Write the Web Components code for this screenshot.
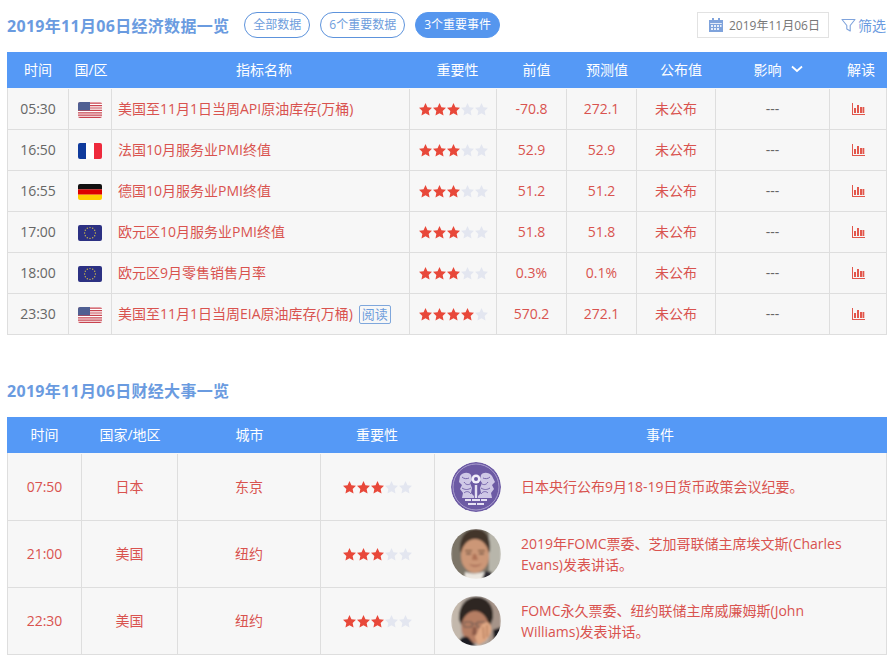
<!DOCTYPE html>
<html lang="zh">
<head>
<meta charset="utf-8">
<title>经济数据一览</title>
<style>
  html, body { margin: 0; background: #fff; overflow: hidden; }
  body { font: 14px "Open Sans", "Noto Sans CJK SC", sans-serif; color: #666; }
</style>
</head>
<body>
<calendar-page></calendar-page>

<script>
const FLAGS = {
  us: `<rect width="24" height="16" fill="#fff"/>
    <path d="M0 1.200h24M0 3.600h24M0 6h24M0 8.400h24M0 10.800h24M0 13.200h24M0 15.400h24" stroke="#c8434f" stroke-width="1.200"/>
    <rect width="12" height="8.400" fill="#4f5f92"/>`,
  fr: `<rect width="8" height="16" fill="#0f3a9c"/><rect x="8" width="8" height="16" fill="#fff"/><rect x="16" width="8" height="16" fill="#ee2a3c"/>`,
  de: `<rect width="24" height="5.400" fill="#111"/><rect y="5.400" width="24" height="5.300" fill="#dd0000"/><rect y="10.700" width="24" height="5.300" fill="#ffce00"/>`,
  eu: `<rect width="24" height="16" fill="#2c3183"/>
    <g fill="#c9b64a">${Array.from({ length: 12 }, (_, i) => {
      const a = i * Math.PI / 6
      return `<circle cx="${(12 + 5.4 * Math.cos(a)).toFixed(2)}" cy="${(8 + 5.4 * Math.sin(a)).toFixed(2)}" r=".7"/>`
    }).join('')}</g>`
}

customElements.define('flag-icon', class extends HTMLElement {
  constructor () {
    super()
    this.attachShadow({ mode: 'open' }).innerHTML = `
      <style>
        :host { display: block; width: 24px; height: 16px; margin-top: 1px; }
        svg { display: block; border-radius: 2px; }
      </style>
      <svg width="24" height="16" viewBox="0 0 24 16">${FLAGS[this.getAttribute('code')]}</svg>`
  }
})

customElements.define('star-rating', class extends HTMLElement {
  constructor () {
    super()
    const on = Number(this.getAttribute('value'))
    const star = 'M6.500 0l1.950 4.200 4.550.6-3.350 3.100.9 4.600-4.050-2.300-4.050 2.300.9-4.600L0 4.800l4.550-.6z'
    const stars = [0, 1, 2, 3, 4].map(i =>
      `<svg width="13" height="13" viewBox="0 0 13 13"><path d="${star}" fill="${i < on ? '#e8483a' : '#e3e6f0'}"/></svg>`).join('')
    this.attachShadow({ mode: 'open' }).innerHTML = `
      <style>
        :host { display: flex; gap: 1px; }
        svg { display: block; }
      </style>${stars}`
  }
})

customElements.define('pill-button', class extends HTMLElement {
  constructor () {
    super()
    this.attachShadow({ mode: 'open' }).innerHTML = `
      <style>
        :host {
          display: block; height: 24px; line-height: 23px; padding: 0 8px;
          border: 1px solid #5d93dc; border-radius: 13px;
          font-size: 12px; color: #6d9ddc; white-space: nowrap;
        }
        :host([active]) { background: #5596ee; border-color: #5596ee; color: #fff; }
      </style>
      <slot></slot>`
  }
})

customElements.define('top-bar', class extends HTMLElement {
  constructor () {
    super()
    this.attachShadow({ mode: 'open' }).innerHTML = `
      <style>
        :host { display: flex; align-items: center; height: 26px; margin: 12px 0 14px; }
        h2 { margin: 0 15px 0 0; font-size: 16px; letter-spacing: .3px; font-weight: 700; color: #6a9be0; white-space: nowrap; }
        .pills { display: flex; gap: 10px; }
        .date {
          display: flex; align-items: center; gap: 6px; box-sizing: border-box;
          margin-left: auto; width: 132px; height: 26px; padding-left: 11px;
          border: 1px solid #e2e2e2; font-size: 12px; color: #777; white-space: nowrap;
        }
        .filter { display: flex; align-items: center; gap: 2px; margin: 0 1px 0 12px; font-size: 14px; color: #6a9be0; white-space: nowrap; }
        svg { display: block; }
      </style>
      <h2>2019年11月06日经济数据一览</h2>
      <div class="pills">
        <pill-button>全部数据</pill-button>
        <pill-button>6个重要数据</pill-button>
        <pill-button active>3个重要事件</pill-button>
      </div>
      <div class="date">
        <svg width="14" height="14" viewBox="0 0 14 14">
          <path fill="#7fa3dc" d="M0 2h14v12H0z"/><path fill="#7fa3dc" d="M3 0h2v3H3zM9 0h2v3H9z"/>
          <path fill="#fff" d="M1.200 5h11.600v.8H1.200z"/>
          <path fill="#e8effa" d="M2 7h2v2H2zM5 7h2v2H5zM8 7h2v2H8zM11 7h1.500v2H11zM2 10h2v2H2zM5 10h2v2H5zM8 10h2v2H8z"/>
        </svg>
        2019年11月06日
      </div>
      <div class="filter">
        <svg width="15" height="15" viewBox="0 0 15 15">
          <path d="M1 1.500h13L9.200 7.500v5.500L5.800 11V7.500z" fill="none" stroke="#7fa3dc" stroke-width="1.100" stroke-linejoin="round"/>
        </svg>
        筛选
      </div>`
  }
})

customElements.define('table-head', class extends HTMLElement {
  constructor () {
    super()
    const cells = this.getAttribute('cells').split('|')
    const html = cells.map(c => c === '影响'
      ? `<div>影响<svg width="12" height="8" viewBox="0 0 12 8"><path d="M1 1.500l5 4.500 5-4.500" fill="none" stroke="#fff" stroke-width="1.800"/></svg></div>`
      : `<div>${c}</div>`).join('')
    this.attachShadow({ mode: 'open' }).innerHTML = `
      <style>
        :host {
          display: grid; grid-template-columns: var(--head-cols); height: 36px; padding: 0 1px;
          background: #5599f6; color: #fff; font-size: 14px;
        }
        div { display: flex; align-items: center; justify-content: center; white-space: nowrap; padding-bottom: 2px; }
        svg { margin-left: 9px; }
      </style>${html}`
  }
})

customElements.define('data-row', class extends HTMLElement {
  constructor () {
    super()
    const a = n => this.getAttribute(n)
    const tag = this.hasAttribute('read') ? '<span class="tag">阅读</span>' : ''
    this.attachShadow({ mode: 'open' }).innerHTML = `
      <style>
        :host {
          display: grid; grid-template-columns: var(--cols); height: 41px; box-sizing: border-box;
          background: #f7f7f7; border: 1px solid #dedede; border-top: 0;
          color: #d9534f; font-size: 14px;
        }
        :host(:first-of-type) { height: 42px; padding-top: 1px; }
        .c { display: flex; align-items: center; justify-content: center; border-left: 1px solid #dedede; white-space: nowrap; min-width: 0; }
        .c:first-of-type { border-left: 0; color: #666; }
        .t { padding-bottom: 2px; }
        .name { justify-content: flex-start; padding-left: 6px; }
        .none { color: #666; }
        .tag {
          margin: 2px 0 0 6px; padding: 0 2px; height: 17px; line-height: 17px; font-size: 13px;
          border: 1px solid #7fa7dc; border-radius: 2px; color: #6d9ddc;
        }
      </style>
      <div class="c t">${a('time')}</div>
      <div class="c"><flag-icon code="${a('flag')}"></flag-icon></div>
      <div class="c t name">${a('name')}${tag}</div>
      <div class="c"><star-rating value="${a('stars')}"></star-rating></div>
      <div class="c t">${a('prev')}</div>
      <div class="c t">${a('fore')}</div>
      <div class="c t">未公布</div>
      <div class="c t none">---</div>
      <div class="c">
        <svg width="13" height="12" viewBox="0 0 13 12">
          <path fill="#e2574c" d="M0 0h1v11h12v1H0zM2 5h2v5H2zM5 2h2v8H5zM8 4h2v6H8zM10.500 4h1.800v6h-1.800z"/>
        </svg>
      </div>`
  }
})

customElements.define('portrait-pic', class extends HTMLElement {
  constructor () {
    super()
    const kinds = {
      seal: `<circle cx="25" cy="25" r="25" fill="#6c5aa4"/>
        <circle cx="25" cy="25" r="23" fill="none" stroke="#b9afd8" stroke-width=".8"/>
        <g filter="url(#fine)">
          <path fill="#cfc8e6" d="M9 14c3-4 9-4 11-1l1 5-2 3 2 5-1 5 3 3v2H11l1-5-3-4 2-4-3-3zM41 14c-3-4-9-4-11-1l-1 5 2 3-2 5 1 5-3 3v2h14l-1-5 3-4-2-4 3-3z"/>
          <path fill="none" stroke="#6c5aa4" stroke-width=".9" d="M11 15c2 2 5 2 7 1M13 20c2 3 4 3 6 2M11 26c3 2 6 2 9 0M13 31c2-2 5-2 7 1M39 15c-2 2-5 2-7 1M37 20c-2 3-4 3-6 2M39 26c-3 2-6 2-9 0M37 31c-2-2-5-2-7 1"/>
          <circle cx="25" cy="17" r="4.500" fill="#f2effa"/><circle cx="25" cy="17" r="2" fill="#6c5aa4"/>
          <path fill="#e6e1f3" d="M23.800 23h2.400v13h-2.400zM14 37h22v2H14zM17 41h16v2H17z"/>
          <path fill="#6c5aa4" d="M20 37h1v2h-1zM29 37h1v2h-1zM25 41h1v2h-1z"/>
        </g>`,
      evans: `<g filter="url(#soft)">
          <rect width="50" height="50" fill="#7b7468"/>
          <rect x="38" width="12" height="50" fill="#b8b6ab"/>
          <path fill="#43362b" d="M9 22C8 7 16 0 25 0c9 0 15 7 14 22l-3 3H12z"/>
          <ellipse cx="24" cy="27" rx="14" ry="17" fill="#cc9777"/>
          <path fill="#6a4834" d="M14 21h7v1.300h-7zM27 21h7v1.300h-7z"/>
          <path fill="#4d3a30" d="M15 24h5v1.200h-5zM28 24h5v1.200h-5z"/>
          <path fill="#af7257" d="M22 25h3l2 6h-6z"/>
          <path fill="#8f4f41" d="M18 35c4 2 9 2 13-.5-3 3.500-10 4-13 .5z"/>
          <path fill="#ebe6df" d="M14 43c5 2 14 2 22-1l2 8H14z"/>
          <path fill="#2e2c30" d="M34 42l7 1-2 7h-8z"/>
        </g>`,
      williams: `<g filter="url(#soft)">
          <rect width="50" height="50" fill="#b1a69e"/>
          <rect x="38" width="12" height="50" fill="#a69489"/>
          <rect width="10" height="50" fill="#c3b8ac"/>
          <path fill="#2d2521" d="M8 24C7 9 16 1 26 1s17 8 16 21l-3 8H11z"/>
          <ellipse cx="24" cy="31" rx="13.500" ry="16" fill="#b67e64"/>
          <path fill="none" stroke="#6a5650" stroke-width="1" d="M13 26h8v5h-8zM26 26h8v5h-8zM21 28h5"/>
          <path fill="#8b5a48" d="M22 31h3l1 8h-5z"/>
          <path fill="#e0a884" d="M28 33c3-6 8-9 11-5 3 5 0 14-6 18l-6 3-3-8z"/>
          <path fill="none" stroke="#a86c4c" stroke-width="1" d="M32 31l1 12M36 29l0 12"/>
          <path fill="#1c1c24" d="M7 50c0-7 5-11 10-9l8 9z"/>
          <path fill="#1c1c24" d="M42 34l8-3v12l-7 3z"/>
        </g>`
    }
    this.attachShadow({ mode: 'open' }).innerHTML = `
      <style>
        :host { display: block; width: 50px; height: 50px; flex: none; }
        svg { display: block; border-radius: 50%; }
      </style>
      <svg width="50" height="50" viewBox="0 0 50 50">
        <defs>
          <filter id="soft" x="-5%" y="-5%" width="110%" height="110%"><feGaussianBlur stdDeviation=".8"/></filter>
          <filter id="fine" x="-5%" y="-5%" width="110%" height="110%"><feGaussianBlur stdDeviation=".35"/></filter>
        </defs>
        ${kinds[this.getAttribute('kind')]}
      </svg>`
  }
})

customElements.define('event-row', class extends HTMLElement {
  constructor () {
    super()
    const a = n => this.getAttribute(n)
    this.attachShadow({ mode: 'open' }).innerHTML = `
      <style>
        :host {
          display: grid; grid-template-columns: var(--cols); height: 67px; box-sizing: border-box;
          background: #f7f7f7; border: 1px solid #dedede; border-top: 0;
          color: #d9534f; font-size: 14px;
        }
        :host(:first-of-type) { height: 68px; padding-top: 1px; }
        :host(:first-of-type) .text { margin-bottom: 2px; }
        .c { display: flex; align-items: center; justify-content: center; border-left: 1px solid #dedede; white-space: nowrap; }
        .c:first-of-type { border-left: 0; }
        .t { padding-bottom: 2px; }
        .event { justify-content: flex-start; padding-left: 16px; gap: 20px; }
        .text { line-height: 21px; white-space: normal; width: 335px; }
      </style>
      <div class="c t">${a('time')}</div>
      <div class="c t">${a('country')}</div>
      <div class="c t">${a('city')}</div>
      <div class="c"><star-rating value="3"></star-rating></div>
      <div class="c event">
        <portrait-pic kind="${a('pic')}"></portrait-pic>
        <div class="text"><slot></slot></div>
      </div>`
  }
})

customElements.define('calendar-page', class extends HTMLElement {
  constructor () {
    super()
    const rows = [
      ['05:30', 'us', '美国至11月1日当周API原油库存(万桶)', 3, '-70.8', '272.1'],
      ['16:50', 'fr', '法国10月服务业PMI终值', 3, '52.9', '52.9'],
      ['16:55', 'de', '德国10月服务业PMI终值', 3, '51.2', '51.2'],
      ['17:00', 'eu', '欧元区10月服务业PMI终值', 3, '51.8', '51.8'],
      ['18:00', 'eu', '欧元区9月零售销售月率', 3, '0.3%', '0.1%'],
      ['23:30', 'us', '美国至11月1日当周EIA原油库存(万桶)', 4, '570.2', '272.1', true]
    ]
    const dataRows = rows.map(r => `<data-row time="${r[0]}" flag="${r[1]}" name="${r[2]}" stars="${r[3]}" prev="${r[4]}" fore="${r[5]}"${r[6] ? ' read' : ''}></data-row>`).join('')
    this.attachShadow({ mode: 'open' }).innerHTML = `
      <style>
        :host { display: block; width: 880px; margin-left: 7px; }
        .data { --cols: 60px 43px 298px 87px 70px 70px 79px 114px 1fr; --head-cols: 60px 46px 300px 87px 71px 70px 78px 116px 1fr; }
        .events { --cols: 73px 96px 143px 114px 1fr; --head-cols: 73px 98px 141px 114px 1fr; }
        h2 { margin: 45px 0 15px; height: 22px; line-height: 22px; font-size: 16px; letter-spacing: .3px; font-weight: 700; color: #6a9be0; }
      </style>
      <top-bar></top-bar>
      <div class="data">
        <table-head cells="时间|国/区|指标名称|重要性|前值|预测值|公布值|影响|解读"></table-head>
        ${dataRows}
      </div>
      <h2>2019年11月06日财经大事一览</h2>
      <div class="events">
        <table-head cells="时间|国家/地区|城市|重要性|事件"></table-head>
        <event-row time="07:50" country="日本" city="东京" pic="seal">日本央行公布9月18-19日货币政策会议纪要。</event-row>
        <event-row time="21:00" country="美国" city="纽约" pic="evans">2019年FOMC票委、芝加哥联储主席埃文斯(Charles Evans)发表讲话。</event-row>
        <event-row time="22:30" country="美国" city="纽约" pic="williams">FOMC永久票委、纽约联储主席威廉姆斯(John Williams)发表讲话。</event-row>
      </div>`
  }
})
</script>
</body>
</html>
